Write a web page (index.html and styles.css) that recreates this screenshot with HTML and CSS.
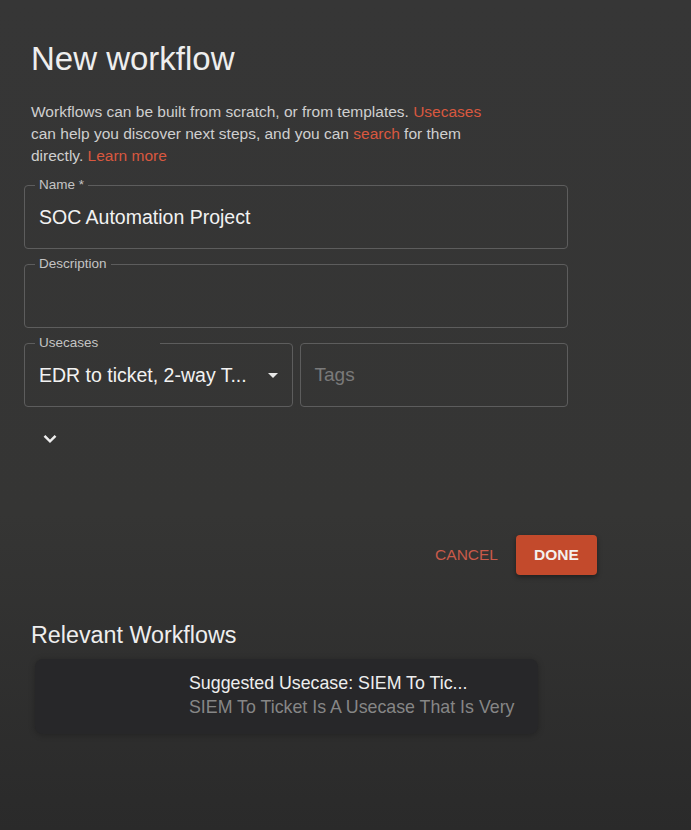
FILE: index.html
```html
<!DOCTYPE html>
<html>
<head>
<meta charset="utf-8">
<link rel="stylesheet" href="styles.css">
</head>
<body>
<main class="dialog">
  <h1 class="title">New workflow</h1>
  <p class="intro">Workflows can be built from scratch, or from templates. <a class="link">Usecases</a> can help you discover next steps, and you can <a class="link">search</a> for them directly. <a class="link">Learn more</a></p>

  <div class="fields">
    <fieldset class="field">
      <legend>Name *</legend>
      <div class="value">SOC Automation Project</div>
    </fieldset>
    <fieldset class="field">
      <legend>Description</legend>
      <div class="value"></div>
    </fieldset>
    <div class="row">
      <fieldset class="field field-half">
        <legend class="legend-wide">Usecases</legend>
        <div class="value select">
          <span>EDR to ticket, 2-way T...</span>
          <svg class="caret" width="10" height="5" viewBox="0 0 10 5"><path d="M0 0h10L5 5z" fill="#e8e8e8"/></svg>
        </div>
      </fieldset>
      <fieldset class="field field-half field-nolabel">
        <div class="value placeholder">Tags</div>
      </fieldset>
    </div>
  </div>

  <div class="expand">
    <svg width="14" height="10" viewBox="0 0 14 10"><path d="M1.5 1.8l5.5 5.5 5.5-5.5" fill="none" stroke="#eeeeee" stroke-width="2.5"/></svg>
  </div>

  <div class="actions">
    <button class="btn btn-text">CANCEL</button>
    <button class="btn btn-primary">DONE</button>
  </div>

  <h2 class="subtitle">Relevant Workflows</h2>
  <div class="card">
    <div class="card-title">Suggested Usecase: SIEM To Tic...</div>
    <div class="card-desc">SIEM To Ticket Is A Usecase That Is Very</div>
  </div>
</main>
</body>
</html>
```

FILE: styles.css
```css
html, body {
  margin: 0;
  padding: 0;
}
body {
  background: linear-gradient(180deg, #363636 0%, #353534 62%, #2a2a2a 100%);
  font-family: "Liberation Sans", Arial, sans-serif;
  color: #e6e6e6;
  min-height: 830px;
}
.dialog {
  width: 573px;
  padding: 39px 0 0 24px;
}
.title {
  margin: 0 0 0 7px;
  font-size: 33px;
  font-weight: 400;
  line-height: 40px;
  color: #eeeeee;
}
.intro {
  margin: 22px 0 0 7px;
  width: 462px;
  font-size: 15.5px;
  line-height: 22px;
  color: #cfcfcf;
}
.link {
  color: #d9583f;
}
.fields {
  width: 544px;
  margin-top: 10px;
  display: flex;
  flex-direction: column;
  gap: 7px;
}
.field {
  margin: 0;
  padding: 0 14px;
  border: 1px solid #5d5d5d;
  border-radius: 4px;
  min-width: 0;
}
.field legend {
  padding: 0 4px;
  margin-left: -4px;
  font-size: 13.5px;
  line-height: 16px;
  color: #c4c4c4;
}
.field .legend-wide {
  padding-right: 62px;
}
.value {
  height: 55px;
  display: flex;
  align-items: center;
  font-size: 19.5px;
  color: #f2f2f2;
  padding-bottom: 7px;
  box-sizing: border-box;
}
.row {
  display: flex;
  gap: 7px;
}
.field-half {
  flex: 1 1 0;
}
.field-nolabel {
  margin-top: 8px;
}
.field-nolabel .value {
  height: 61px;
  padding-bottom: 0;
  font-size: 19px;
}
.select {
  justify-content: space-between;
}
.placeholder {
  color: #7a7a7a;
}
.expand {
  margin: 27px 0 0 19px;
  height: 10px;
}
.expand svg {
  display: block;
}
.actions {
  margin-top: 91px;
  display: flex;
  justify-content: flex-end;
  align-items: center;
  gap: 18px;
}
.btn {
  font-family: "Liberation Sans", Arial, sans-serif;
  font-size: 15.5px;
  border: none;
  cursor: pointer;
}
.btn-text {
  background: transparent;
  color: #c85a4a;
  padding: 0;
}
.btn-primary {
  background: #c34a2c;
  color: #f4f0ee;
  font-weight: 700;
  width: 81px;
  height: 40px;
  border-radius: 4px;
  box-shadow: 0 2px 5px rgba(0,0,0,0.4);
}
.subtitle {
  margin: 46px 0 0 7px;
  font-size: 23.3px;
  font-weight: 400;
  line-height: 28px;
  color: #eeeeee;
}
.card {
  margin: 10px 0 0 11px;
  width: 503px;
  height: 75px;
  box-sizing: border-box;
  padding: 12px 0 0 154px;
  background: #272729;
  border-radius: 8px;
  box-shadow: 0 1px 6px rgba(0,0,0,0.25);
}
.card-title {
  font-size: 17.8px;
  line-height: 24px;
  color: #eeeeee;
}
.card-desc {
  font-size: 17.8px;
  line-height: 24px;
  color: #868686;
}
```
